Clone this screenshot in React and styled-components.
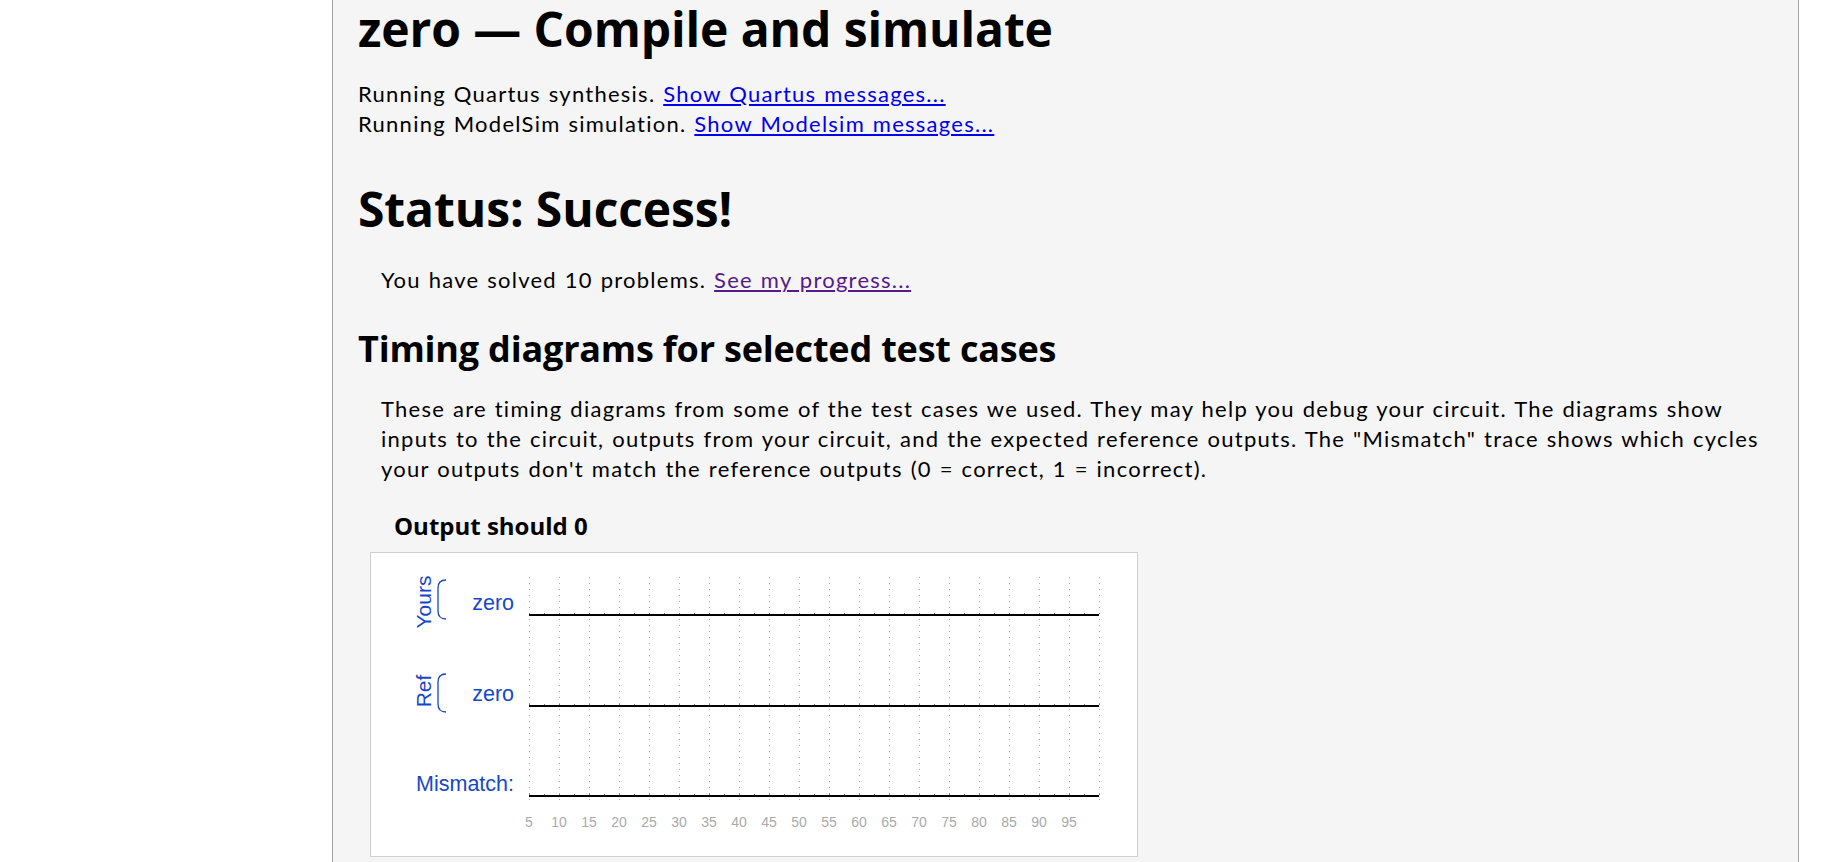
import styled, { createGlobalStyle } from "styled-components";

const GlobalStyle = createGlobalStyle`
  body {
    margin: 0;
    background: #fff;
    font-family: Lato, "Liberation Sans", sans-serif;
    color: #000;
  }
`;

const Page = styled.div`
  display: flex;
  min-height: 862px;
`;

const Sidebar = styled.aside`
  width: 332px;
  flex-shrink: 0;
`;

const Main = styled.main`
  width: 1467px;
  box-sizing: border-box;
  border-left: 1px solid #a4a4a4;
  border-right: 1px solid #a4a4a4;
  background: #f5f5f5;
  padding: 0 25px;
  height: 862px;
  overflow: hidden;
`;

const Title = styled.h1`
  font-family: "Open Sans", sans-serif;
  font-weight: 700;
  font-size: 48px;
  line-height: 58px;
  margin: ${(p) => p.$top || 0}px 0 0;
  letter-spacing: -0.1px;
`;

const Subtitle = styled.h2`
  font-family: "Open Sans", sans-serif;
  font-weight: 700;
  font-size: 36px;
  line-height: 42px;
  margin: 33px 0 0;
  letter-spacing: -0.2px;
`;

const Text = styled.p`
  font-size: 22px;
  line-height: 30px;
  letter-spacing: 1.25px;
  word-spacing: 1px;
  margin: ${(p) => p.$top || 0}px 0 0;
  padding-left: ${(p) => (p.$indent ? 23 : 0)}px;
`;

const Link = styled.a`
  color: ${(p) => (p.$visited ? "#551a8b" : "#0000ee")};
  text-decoration: underline;
`;

const CaseTitle = styled.h3`
  font-family: "Open Sans", sans-serif;
  font-weight: 700;
  font-size: 24px;
  line-height: 28px;
  margin: 28px 0 0 36px;
`;

const DiagramBox = styled.div`
  margin: 12px 0 0 12px;
  width: 768px;
  height: 305px;
  box-sizing: border-box;
  background: #fff;
  border: 1px solid #cfcfcf;
`;

const BLUE = "#1747c9";
const LABEL_FONT = "Liberation Sans, Arial, sans-serif";

const rows = [
  { group: "Yours", name: "zero", y: 62 },
  { group: "Ref", name: "zero", y: 153 },
  { group: null, name: "Mismatch:", y: 243 },
];

const X0 = 158;
const STEP = 30;
const cols = Array.from({ length: 20 }, (_, i) => i);
const ticks = Array.from({ length: 39 }, (_, i) => i);

function Bracket({ top, bottom }) {
  return (
    <path
      d={`M75 ${top} Q67 ${top} 67 ${top + 8} L67 ${bottom - 8} Q67 ${bottom} 75 ${bottom}`}
      fill="none"
      stroke={BLUE}
      strokeWidth="1.3"
    />
  );
}

function Trace({ y }) {
  return (
    <g>
      <line x1={X0} x2={X0 + 19 * STEP} y1={y} y2={y} stroke="#000" strokeWidth="2" />
      {ticks.map((i) => (
        <line
          key={i}
          x1={X0 + i * 15 + 0.5}
          x2={X0 + i * 15 + 0.5}
          y1={y - 2}
          y2={y - 1}
          stroke="#777"
          strokeWidth="1"
        />
      ))}
    </g>
  );
}

function TimingDiagram() {
  return (
    <svg width="766" height="303" viewBox="0 0 766 303">
      {cols.map((i) => (
        <line
          key={i}
          x1={X0 + i * STEP + 0.5}
          x2={X0 + i * STEP + 0.5}
          y1="24"
          y2="252"
          stroke="#a8a8a8"
          strokeWidth="1"
          strokeDasharray="1 5"
        />
      ))}
      {rows.map((r) => (
        <g key={r.group || r.name}>
          <Trace y={r.y} />
          <text
            x="143"
            y={r.y - 5}
            textAnchor="end"
            fill={BLUE}
            fontFamily={LABEL_FONT}
            fontSize="21.5"
          >
            {r.name}
          </text>
        </g>
      ))}
      <text
        transform="translate(60 49) rotate(-90)"
        textAnchor="middle"
        fill={BLUE}
        fontFamily={LABEL_FONT}
        fontSize="21"
      >
        Yours
      </text>
      <Bracket top={27} bottom={66} />
      <text
        transform="translate(60 138) rotate(-90)"
        textAnchor="middle"
        fill={BLUE}
        fontFamily={LABEL_FONT}
        fontSize="21"
      >
        Ref
      </text>
      <Bracket top={121} bottom={159} />
      {cols.slice(0, 19).map((i) => (
        <text
          key={i}
          x={X0 + i * STEP}
          y="274"
          textAnchor="middle"
          fill="#aaaaaa"
          fontFamily={LABEL_FONT}
          fontSize="14"
        >
          {(i + 1) * 5}
        </text>
      ))}
    </svg>
  );
}

export default function App() {
  return (
    <>
      <GlobalStyle />
      <Page>
        <Sidebar />
        <Main>
          <Title>zero — Compile and simulate</Title>
          <Text $top={21}>
            Running Quartus synthesis. <Link href="#">Show Quartus messages...</Link>
            <br />
            Running ModelSim simulation. <Link href="#">Show Modelsim messages...</Link>
          </Text>
          <Title $top={41}>Status: Success!</Title>
          <Text $top={27} $indent>
            You have solved 10 problems. <Link href="#" $visited>See my progress...</Link>
          </Text>
          <Subtitle>Timing diagrams for selected test cases</Subtitle>
          <Text $top={24} $indent>
            These are timing diagrams from some of the test cases we used. They may help you debug
            your circuit. The diagrams show inputs to the circuit, outputs from your circuit, and the
            expected reference outputs. The "Mismatch" trace shows which cycles your outputs don't
            match the reference outputs (0 = correct, 1 = incorrect).
          </Text>
          <CaseTitle>Output should 0</CaseTitle>
          <DiagramBox>
            <TimingDiagram />
          </DiagramBox>
        </Main>
      </Page>
    </>
  );
}
